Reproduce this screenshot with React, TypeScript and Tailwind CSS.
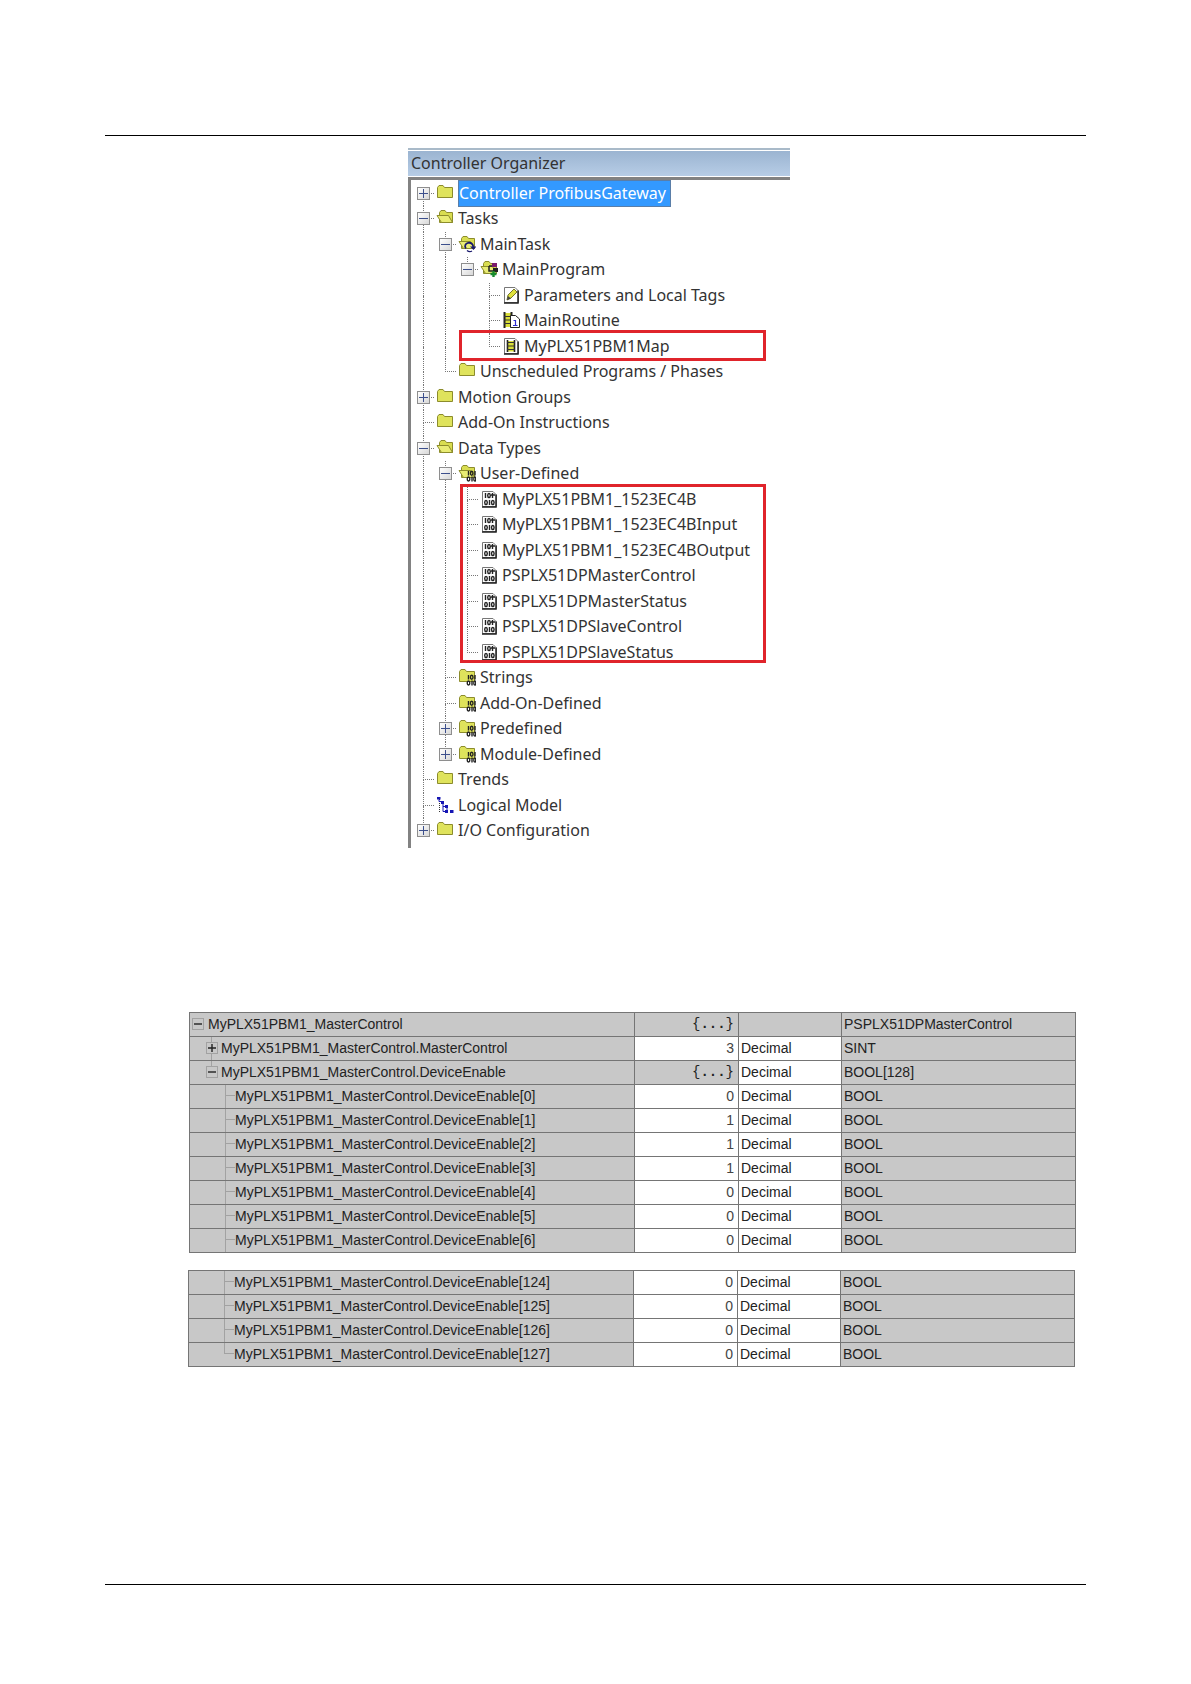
import clsx from "clsx";
import { ReactNode } from "react";

type IconName =
  | "folder"
  | "open"
  | "task"
  | "program"
  | "tags"
  | "mainRoutine"
  | "routine"
  | "typesOpen"
  | "types"
  | "dataType"
  | "model";

interface ITreeRow {
  label: string;
  icon: IconName;
  // one entry per level, true when the guide line carries on below this row
  guides: boolean[];
  expander?: "+" | "-";
  isSelected?: boolean;
}

const TREE: ITreeRow[] = [
  { label: "Controller ProfibusGateway", icon: "folder", guides: [true], expander: "+", isSelected: true },
  { label: "Tasks", icon: "open", guides: [true], expander: "-" },
  { label: "MainTask", icon: "task", guides: [true, true], expander: "-" },
  { label: "MainProgram", icon: "program", guides: [true, true, false], expander: "-" },
  { label: "Parameters and Local Tags", icon: "tags", guides: [true, true, false, true] },
  { label: "MainRoutine", icon: "mainRoutine", guides: [true, true, false, true] },
  { label: "MyPLX51PBM1Map", icon: "routine", guides: [true, true, false, false] },
  { label: "Unscheduled Programs / Phases", icon: "folder", guides: [true, false] },
  { label: "Motion Groups", icon: "folder", guides: [true], expander: "+" },
  { label: "Add-On Instructions", icon: "folder", guides: [true] },
  { label: "Data Types", icon: "open", guides: [true], expander: "-" },
  { label: "User-Defined", icon: "typesOpen", guides: [true, true], expander: "-" },
  { label: "MyPLX51PBM1_1523EC4B", icon: "dataType", guides: [true, true, true] },
  { label: "MyPLX51PBM1_1523EC4BInput", icon: "dataType", guides: [true, true, true] },
  { label: "MyPLX51PBM1_1523EC4BOutput", icon: "dataType", guides: [true, true, true] },
  { label: "PSPLX51DPMasterControl", icon: "dataType", guides: [true, true, true] },
  { label: "PSPLX51DPMasterStatus", icon: "dataType", guides: [true, true, true] },
  { label: "PSPLX51DPSlaveControl", icon: "dataType", guides: [true, true, true] },
  { label: "PSPLX51DPSlaveStatus", icon: "dataType", guides: [true, true, false] },
  { label: "Strings", icon: "types", guides: [true, true] },
  { label: "Add-On-Defined", icon: "types", guides: [true, true] },
  { label: "Predefined", icon: "types", guides: [true, true], expander: "+" },
  { label: "Module-Defined", icon: "types", guides: [true, false], expander: "+" },
  { label: "Trends", icon: "folder", guides: [true] },
  { label: "Logical Model", icon: "model", guides: [true] },
  { label: "I/O Configuration", icon: "folder", guides: [false], expander: "+" },
];

interface ITag {
  name: string;
  value: string;
  style?: string;
  type: string;
  depth: number;
  expander?: "+" | "-";
  isLast?: boolean;
}

const deviceEnable = (index: number, value: string): ITag => ({
  name: `MyPLX51PBM1_MasterControl.DeviceEnable[${index}]`,
  value,
  style: "Decimal",
  type: "BOOL",
  depth: 2,
  isLast: index === 127,
});

const HEAD_TAGS: ITag[] = [
  { name: "MyPLX51PBM1_MasterControl", value: "{...}", type: "PSPLX51DPMasterControl", depth: 0, expander: "-" },
  { name: "MyPLX51PBM1_MasterControl.MasterControl", value: "3", style: "Decimal", type: "SINT", depth: 1, expander: "+" },
  { name: "MyPLX51PBM1_MasterControl.DeviceEnable", value: "{...}", style: "Decimal", type: "BOOL[128]", depth: 1, expander: "-", isLast: true },
  ...["0", "1", "1", "1", "0", "0", "0"].map((value, i) => deviceEnable(i, value)),
];

const TAIL_TAGS: ITag[] = [124, 125, 126, 127].map((i) => deviceEnable(i, "0"));

const ClosedFolder = () => (
  <path d="M1.5 13.5V3.5L3 1.5H7L8.5 3.5H16.5V13.5Z" fill="#dfe35c" stroke="#8c8c2c" />
);

const OpenFolder = () => (
  <>
    <path d="M3.5 13.5V3.5L5 1.5H9L10.5 3.5H16.5V13.5Z" fill="#d9dd50" stroke="#8c8c2c" />
    <path d="M1 6.5H12.5L16.5 13.5H5.5Z" fill="#e9ec74" stroke="#8c8c2c" />
  </>
);

const Bits = () => (
  <g fill="none" stroke="#222" strokeWidth="1.4">
    <path d="M10.5 7V11.5M17 7V11.5M14 12.5V17.5" />
    <ellipse cx="13.7" cy="9.2" rx="1.3" ry="2" />
    <ellipse cx="10.5" cy="15" rx="1.3" ry="2" />
    <ellipse cx="16.8" cy="15" rx="1" ry="2" />
  </g>
);

const Sheet = () => (
  <>
    <path d="M2.5 1.5H13L16.5 5V16.5H2.5Z" fill="#fff" stroke="#777" />
    <path d="M16 4.5V17H2" fill="none" stroke="#222" strokeWidth="1.5" />
  </>
);

const ICONS: Record<IconName, ReactNode> = {
  folder: <ClosedFolder />,
  open: <OpenFolder />,
  task: (
    <>
      <OpenFolder />
      <path d="M8 13.5A4 3.5 0 1 1 15 12" fill="none" stroke="#1b1b6e" strokeWidth="1.8" />
      <path d="M12 11.5H18.5L15.5 15Z" fill="#1b1b6e" />
      <path d="M9 15.5Q11.5 17.5 14 16" fill="none" stroke="#1b1b6e" strokeWidth="1.4" />
    </>
  ),
  program: (
    <>
      <OpenFolder />
      <path d="M9 6H14M9 6V11H14" fill="none" stroke="#222" strokeWidth="1.5" />
      <rect x="12" y="3" width="5" height="4" fill="#7b1c6b" />
      <rect x="13" y="8" width="5" height="4" fill="#222" />
      <path d="M13.5 11V17M10.5 14H16.5" stroke="#168a2c" strokeWidth="2.4" />
    </>
  ),
  tags: (
    <>
      <Sheet />
      <path d="M5 14L6 9L12 3L15 6L9 12Z" fill="#dfe23c" stroke="#77772a" />
      <path d="M5 14L6 10L9 12.5Z" fill="#444" />
    </>
  ),
  mainRoutine: (
    <>
      <path d="M2 2H10V16H2Z" fill="#d9de3a" />
      <path d="M2.5 1V17M9.5 1V17" stroke="#222" strokeWidth="2" />
      <path d="M2 5.5H10M2 9H10M2 12.5H10" stroke="#333" strokeWidth="1.2" />
      <path d="M8.5 4.5H13.5L17.5 8V16.5H8.5Z" fill="#fff" stroke="#222" />
      <path d="M11.5 9.5H13.5V14.5M11 14.5H15.5" fill="none" stroke="#2a2ad0" strokeWidth="1.2" />
    </>
  ),
  routine: (
    <>
      <Sheet />
      <path d="M5.5 4H13V14.5H5.5Z" fill="#d9de3a" />
      <path d="M5.5 3V15M12.5 3V15" stroke="#222" strokeWidth="1.6" />
      <path d="M5 5.500H13M5 9H13M5 12.500H13" stroke="#333" strokeWidth="1.2" />
    </>
  ),
  typesOpen: (
    <>
      <OpenFolder />
      <Bits />
    </>
  ),
  types: (
    <>
      <ClosedFolder />
      <Bits />
    </>
  ),
  dataType: (
    <>
      <Sheet />
      <g fill="none" stroke="#222" strokeWidth="1.4">
        <path d="M5.5 3V8M12.5 3V8M9.5 10V15M11 5H15" />
        <ellipse cx="9" cy="5.5" rx="1.3" ry="2" />
        <ellipse cx="6" cy="12.5" rx="1.3" ry="2" />
        <ellipse cx="12.8" cy="12.5" rx="1.3" ry="2" />
      </g>
    </>
  ),
  model: (
    <>
      <path d="M3.5 3V16" stroke="#333" strokeDasharray="1 1" />
      <path d="M3 3.5V5.500H7V15.500H11M7 10.500H11V15" fill="none" stroke="#1616b4" />
      <path d="M1 1H4.500V3.500H1ZM5 5H8V8H5ZM9 9H12V12H9ZM9 14H12V17H9ZM14 14H17.500V17H14Z" fill="#1616b4" />
    </>
  ),
};

const Guide = ({
  isContinued,
  isOwn,
  isFirst,
}: {
  isContinued: boolean;
  isOwn: boolean;
  isFirst: boolean;
}) => (
  <span className="[grid-area:1/1] flex flex-col pl-[11px]">
    <span
      className={clsx(
        "h-[13px] border-dotted border-[#777]",
        !isFirst && (isOwn || isContinued) && "border-l",
        isOwn && "border-b"
      )}
    />
    <span
      className={clsx("flex-1 border-dotted border-[#777]", isContinued && "border-l")}
    />
  </span>
);

const TreeRow = ({ row, isFirst }: { row: ITreeRow; isFirst: boolean }) => (
  <li className="flex odd:h-[25px] even:h-[26px]">
    {row.guides.map((isContinued, level) => {
      const isOwn = level === row.guides.length - 1;
      return (
        <span key={level} className="grid w-[22px] shrink-0">
          <Guide isContinued={isContinued} isOwn={isOwn} isFirst={isFirst} />
          {isOwn && row.expander && (
            <button
              type="button"
              aria-label={row.label}
              aria-expanded={row.expander === "-"}
              className="[grid-area:1/1] z-10 mt-[6px] ml-[5px] flex size-[13px] items-center justify-center border border-[#8e8e8e] bg-linear-to-br from-white to-[#d8d8d8]"
            >
              <svg viewBox="0 0 9 9" className="size-[9px]" stroke="#3c4f8c">
                <path d={row.expander === "+" ? "M0 4.5H9M4.5 0V9" : "M0 4.5H9"} />
              </svg>
            </button>
          )}
        </span>
      );
    })}
    <span className="w-6 shrink-0 pt-[3px] pl-[2px]">
      <svg viewBox="0 0 18 18" className="size-[18px]">
        {ICONS[row.icon]}
      </svg>
    </span>
    <span
      className={clsx(
        "text-[16px] leading-[24px] whitespace-nowrap",
        row.isSelected &&
          "-my-px border border-[#5a7ea8] bg-[#3399ff] pr-1 text-white"
      )}
    >
      {row.label}
    </span>
  </li>
);

const ControllerOrganizer = () => (
  <section className="w-[382px] font-['Noto_Sans','Open_Sans',sans-serif] text-[#333]">
    <div className="mb-px h-[2px] bg-[#a9bac9]" />
    <h1 className="h-[25px] bg-linear-to-b from-[#9bb4d1] to-[#b7cde6] pl-[3px] text-[16px] leading-[25px]">
      Controller Organizer
    </h1>
    <div className="mt-px h-[3px] bg-[#828282]" />
    <div className="relative border-l-[3px] border-[#828282] pb-1">
      <ul className="pt-px pl-px">
        {TREE.map((row, i) => (
          <TreeRow key={row.label} row={row} isFirst={i === 0} />
        ))}
      </ul>
      <div className="absolute top-[150px] right-[24px] left-[48px] h-[31px] border-[3px] border-[#e0242b]" />
      <div className="absolute top-[304px] right-[24px] left-[49px] h-[179px] border-[3px] border-[#e0242b]" />
    </div>
  </section>
);

const TagName = ({ tag }: { tag: ITag }) => (
  <div className="flex h-[23px]">
    {tag.depth === 2 ? (
      <span className="ml-[35px] w-[10px]">
        <span className="block h-[11px] border-b border-l border-[#a2a2a2]" />
        <span
          className={clsx("block h-[12px] border-[#a2a2a2]", !tag.isLast && "border-l")}
        />
      </span>
    ) : (
      <span className={clsx("grid", tag.depth === 1 ? "ml-4 w-[15px]" : "ml-[2px] w-4")}>
        {tag.depth === 1 && (
          <span
            className={clsx(
              "[grid-area:1/1] ml-[5px] border-l border-[#a2a2a2]",
              tag.isLast && "h-[8px]"
            )}
          />
        )}
        <button
          type="button"
          aria-label={tag.name}
          aria-expanded={tag.expander === "-"}
          className="[grid-area:1/1] z-10 mt-[5px] flex size-[12px] items-center justify-center border border-[#a2a2a2] bg-[#c8c8c8]"
        >
          <svg viewBox="0 0 8 8" className="size-[8px]" stroke="#222" strokeWidth="1.4">
            <path d={tag.expander === "+" ? "M0 4H8M4 0V8" : "M0 4H8"} />
          </svg>
        </button>
      </span>
    )}
    <span className="leading-[23px]">{tag.name}</span>
  </div>
);

const TagTable = ({ tags }: { tags: ITag[] }) => (
  <table className="w-full table-fixed border-collapse text-[14px] leading-[23px] text-[#222] [&_td]:border [&_td]:border-[#757575] [&_td]:p-0">
    <colgroup>
      <col />
      <col className="w-[104px]" />
      <col className="w-[103px]" />
      <col className="w-[234px]" />
    </colgroup>
    <tbody>
      {tags.map((tag) => {
        const isStruct = tag.value === "{...}";
        return (
          <tr key={tag.name} className="h-6">
            <td className="bg-[#c8c8c8]">
              <TagName tag={tag} />
            </td>
            <td className={isStruct ? "bg-[#c8c8c8]" : "bg-white"}>
              {isStruct ? (
                <div className="pr-1 text-right font-['Liberation_Mono',monospace]">
                  {"{"}
                  <b>...</b>
                  {"}"}
                </div>
              ) : (
                <div className="pr-1 text-right text-[#444]">{tag.value}</div>
              )}
            </td>
            <td className={tag.style ? "bg-white" : "bg-[#c8c8c8]"}>
              <div className="pl-[2px]">{tag.style}</div>
            </td>
            <td className="bg-[#c8c8c8]">
              <div className="pl-[2px]">{tag.type}</div>
            </td>
          </tr>
        );
      })}
    </tbody>
  </table>
);

export default function App() {
  return (
    <main className="bg-white px-[105px] pt-[135px] pb-[99px] font-['Liberation_Sans',sans-serif]">
      <div className="border-y border-black pt-3 pb-[217px]">
        <div className="flex justify-center pl-[7px]">
          <ControllerOrganizer />
        </div>
        <div className="mt-[164px] pr-[10px] pl-[84px]">
          <TagTable tags={HEAD_TAGS} />
        </div>
        <div className="mt-[17px] pr-[11px] pl-[83px]">
          <TagTable tags={TAIL_TAGS} />
        </div>
      </div>
    </main>
  );
}
